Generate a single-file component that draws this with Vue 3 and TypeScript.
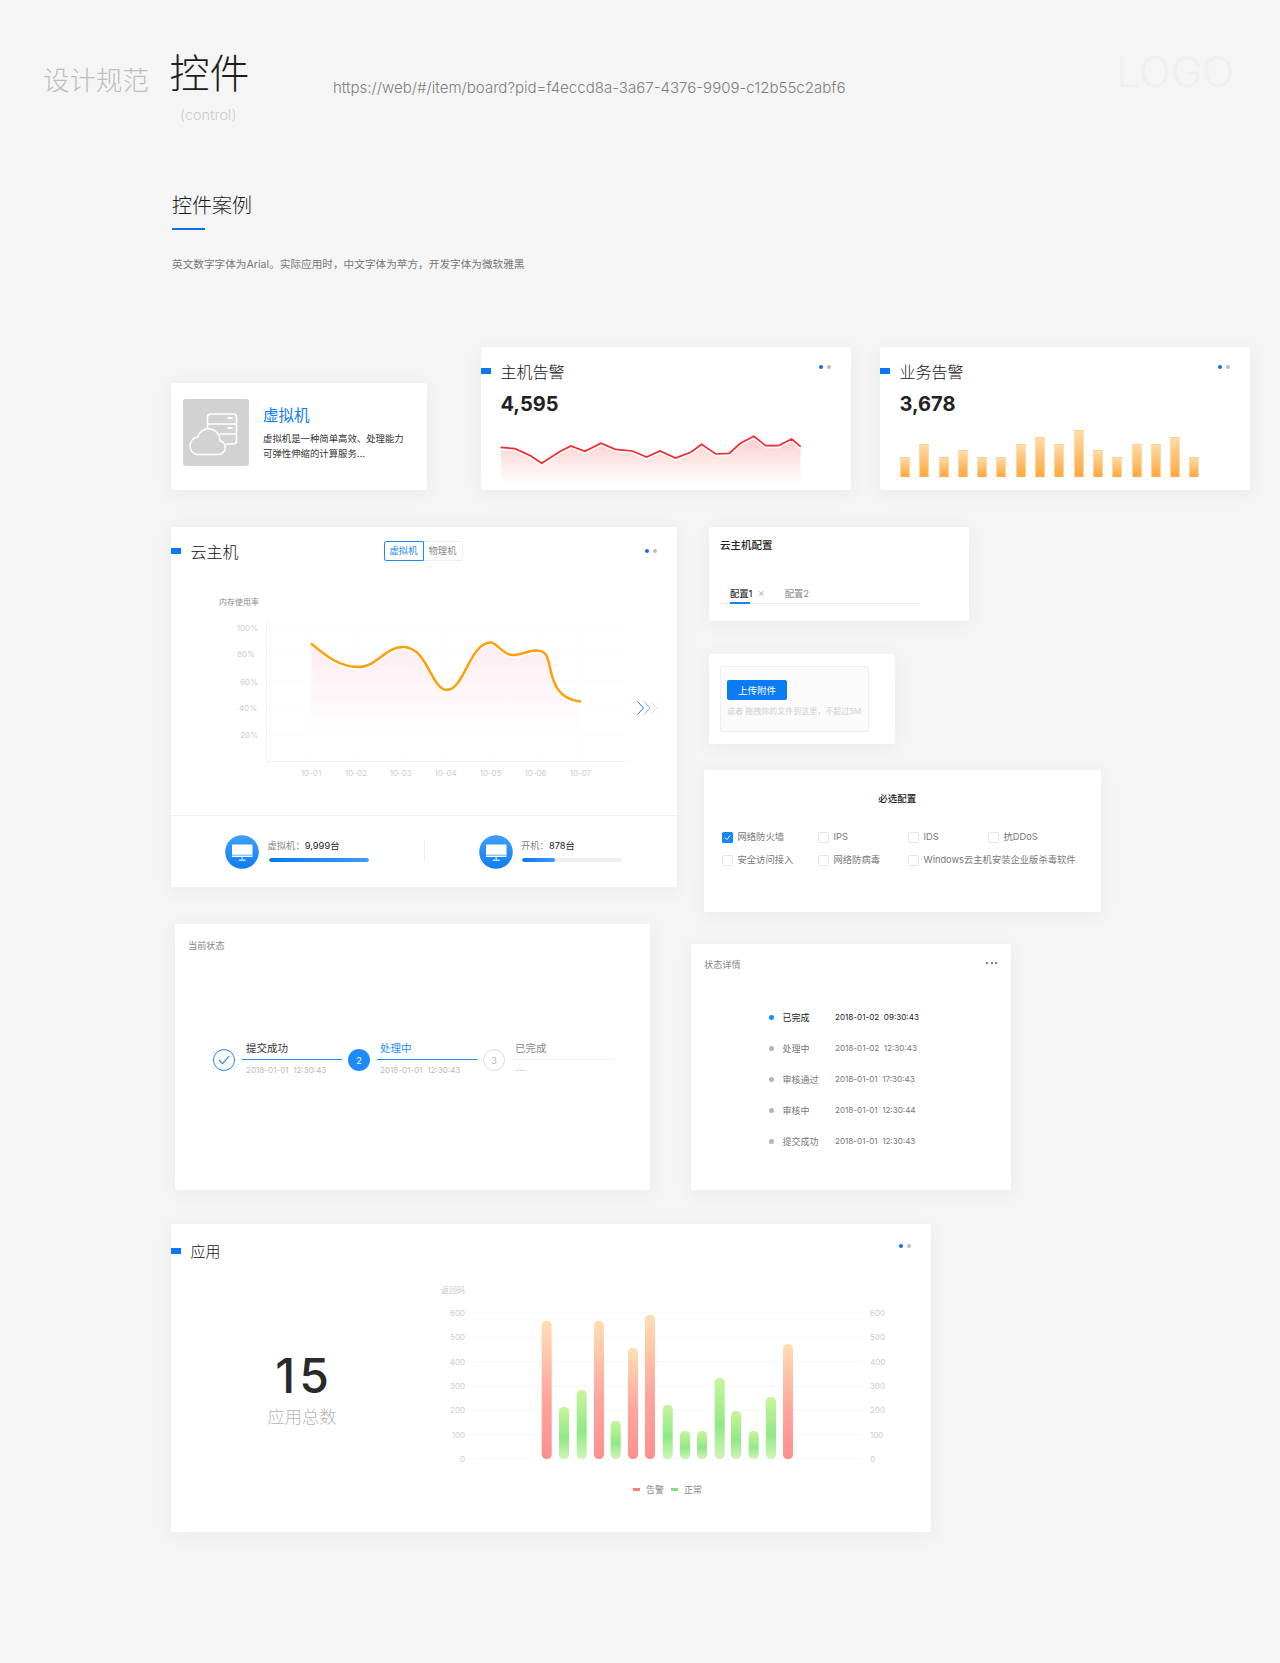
<template>
  <div class="page">
    <header class="top">
      <div class="brand">设计规范</div>
      <div class="page-title">
        <h1>控件</h1>
        <p>(control)</p>
      </div>
      <div class="url">https://web/#/item/board?pid=f4eccd8a-3a67-4376-9909-c12b55c2abf6</div>
      <div class="logo">LOGO</div>
    </header>

    <section class="intro">
      <h2>控件案例</h2>
      <div class="intro-line"></div>
      <p>英文数字字体为Arial。实际应用时，中文字体为苹方，开发字体为微软雅黑</p>
    </section>

    <div class="row row-1">
      <div class="card vm-card">
        <div class="vm-icon">
          <svg width="66" height="67" viewBox="0 0 65 67" fill="none" stroke="#fff" stroke-width="1.5">
            <path d="M24 30V18a3 3 0 0 1 3-3h23a3 3 0 0 1 3 3v24a3 3 0 0 1-3 3h-8" />
            <path d="M24 25h29M36 35h17" />
            <path d="M44 19h5M44 29h5" stroke-width="2" />
            <path d="M13 55.5h22a7 7 0 0 0 1.5-13.8A11.5 11.5 0 0 0 14 38a9 9 0 0 0-1 17.5z" fill="#d2d2d2" />
          </svg>
        </div>
        <div class="vm-text">
          <h3>虚拟机</h3>
          <p>虚拟机是一种简单高效、处理能力</p>
          <p>可弹性伸缩的计算服务...</p>
        </div>
      </div>

      <div class="card alarm-card alarm-host">
        <div class="card-head">
          <i class="head-bar"></i>
          <span class="head-title">主机告警</span>
          <span class="dots dots-high"><i></i><i></i></span>
        </div>
        <div class="alarm-num">4,595</div>
        <svg class="spark" width="370" height="60" viewBox="481 430 370 60">
          <defs>
            <linearGradient id="sparkFill" x1="0" y1="0" x2="0" y2="1">
              <stop offset="0" stop-color="#fbcccc" />
              <stop offset=".9" stop-color="#ffffff" />
            </linearGradient>
          </defs>
          <path :d="sparkArea" fill="url(#sparkFill)" />
          <path :d="sparkLine" fill="none" stroke="#fff" stroke-width="2" transform="translate(0 1.6)" />
          <path :d="sparkLine" fill="none" stroke="#f4282d" stroke-width="1.7" />
        </svg>
      </div>

      <div class="card alarm-card alarm-biz">
        <div class="card-head">
          <i class="head-bar"></i>
          <span class="head-title">业务告警</span>
          <span class="dots dots-high"><i></i><i></i></span>
        </div>
        <div class="alarm-num">3,678</div>
        <div class="mini-bars">
          <i v-for="(h, n) in miniBars" :key="n" :style="{ height: h + 'px' }"></i>
        </div>
      </div>
    </div>

    <div class="row row-2">
      <div class="card host-card">
        <div class="card-head">
          <i class="head-bar"></i>
          <span class="head-title">云主机</span>
          <div class="switch">
            <span class="on">虚拟机</span>
            <span>物理机</span>
          </div>
          <span class="dots"><i></i><i></i></span>
        </div>
        <svg class="host-chart" width="506" height="250" viewBox="171 565 506 250">
          <defs>
            <linearGradient id="memFill" x1="0" y1="0" x2="0" y2="1">
              <stop offset="0" stop-color="#fcecf1" />
              <stop offset=".9" stop-color="#ffffff" />
            </linearGradient>
          </defs>
          <text x="219" y="605" class="t-title">内存使用率</text>
          <path v-for="y in memGrid" :key="y" :d="`M267 ${y}H628`" stroke="#fcfcfc" />
          <path v-for="x in memTicks" :key="x" :d="`M${x} 625V761`" stroke="#fdfdfd" />
          <path d="M266.5 620V761.5H628" fill="none" stroke="#f1f1f1" />
          <text v-for="l in memLabels" :key="l.t" :x="l.x" :y="l.y" class="t-axis" text-anchor="end">{{ l.t }}</text>
          <text v-for="(d, n) in memDays" :key="d" :x="311 + n * 44.9" y="776" class="t-axis" text-anchor="middle">{{ d }}</text>
          <path :d="memLine + 'V746H311.7Z'" fill="url(#memFill)" />
          <path :d="memLine" fill="none" stroke="#fff" stroke-width="2" transform="translate(0 2)" />
          <path :d="memLine" fill="none" stroke="#ff9f0a" stroke-width="2.5" stroke-linecap="round" />
          <g fill="none" stroke="#1478f0" stroke-width="1">
            <path d="M637.5 701.5l6 6.5-6 6.5" />
            <path d="M644 701.5l6 6.5-6 6.5" opacity=".55" />
            <path d="M651 701.5l6 6.5-6 6.5" opacity=".2" />
            <path d="M658 701.5l6 6.5-6 6.5" opacity=".06" />
          </g>
        </svg>
        <div class="stats">
          <template v-for="(s, n) in hostStats" :key="s.label">
            <div class="stat">
              <svg class="stat-icon" width="34" height="34" viewBox="0 0 34 34">
                <defs>
                  <linearGradient id="statFill" x1="0" y1="0" x2="0" y2="1">
                    <stop offset="0" stop-color="#3ea0fb" />
                    <stop offset="1" stop-color="#0f7df0" />
                  </linearGradient>
                </defs>
                <circle cx="17" cy="17" r="16.8" fill="url(#statFill)" />
                <rect x="7" y="9.5" width="20.5" height="12.5" fill="#fff" rx=".6" />
                <path d="M7 20.2h20.5" stroke="#1c84f2" stroke-width=".7" />
                <path d="M17.2 22.2v2.6M13.8 25.2h7" stroke="#fff" stroke-width="1" />
              </svg>
              <div class="stat-info">
                <div class="stat-label">{{ s.label }}<b>{{ s.value }}</b></div>
                <div class="stat-track"><i :style="{ width: s.pct + '%' }"></i></div>
              </div>
            </div>
            <div v-if="n === 0" class="stat-sep"></div>
          </template>
        </div>
      </div>

      <div class="side-col">
        <div class="card config-card">
          <h4>云主机配置</h4>
          <div class="tabs">
            <span class="tab active">配置1</span>
            <span class="tab-x">×</span>
            <span class="tab">配置2</span>
          </div>
        </div>

        <div class="card upload-card">
          <div class="upload-box">
            <button class="upload-btn" type="button">上传附件</button>
            <p>或者 拖拽你的文件到这里，不超过5M</p>
          </div>
        </div>

        <div class="card must-card">
          <h4>必选配置</h4>
          <div class="checks">
            <label v-for="c in checks" :key="c.text" class="check">
              <i :class="{ on: c.on }">
                <svg v-if="c.on" width="11" height="11" viewBox="0 0 11 11" fill="none" stroke="#fff" stroke-width="1">
                  <path d="M2.8 5.6l2 2 3.4-4" />
                </svg>
              </i>
              {{ c.text }}
            </label>
          </div>
        </div>
      </div>
    </div>

    <div class="row row-3">
      <div class="card state-card">
        <div class="state-title">当前状态</div>
        <div class="steps">
          <div v-for="(s, n) in steps" :key="s.label" class="step" :class="s.kind">
            <span class="step-dot">
              <svg v-if="n === 0" width="12" height="10" viewBox="0 0 12 10" fill="none" stroke="#1a8cff" stroke-width="1.1">
                <path d="M1 5l3.6 3.6L11 1.2" />
              </svg>
              <template v-else>{{ n + 1 }}</template>
            </span>
            <div class="step-body">
              <div class="step-label">{{ s.label }}</div>
              <div class="step-date">{{ s.date }}</div>
            </div>
          </div>
        </div>
      </div>

      <div class="card detail-card">
        <div class="detail-head">
          <span>状态详情</span>
          <span class="more"><i></i><i></i><i></i></span>
        </div>
        <ul class="detail-list">
          <li v-for="(d, n) in details" :key="d.label" :class="{ current: n === 0 }">
            <i></i>
            <span class="d-label">{{ d.label }}</span>
            <span class="d-date">{{ d.date }}</span>
          </li>
        </ul>
      </div>
    </div>

    <div class="row row-4">
      <div class="card app-card">
        <div class="card-head">
          <i class="head-bar"></i>
          <span class="head-title">应用</span>
          <span class="dots dots-app"><i></i><i></i></span>
        </div>
        <div class="app-body">
          <div class="app-total">
            <strong>15</strong>
            <span>应用总数</span>
          </div>
          <svg class="app-chart" width="497" height="269" viewBox="433 1263 497 269">
            <defs>
              <linearGradient id="redBar" x1="0" y1="0" x2="0" y2="1">
                <stop offset="0" stop-color="#ffdfb4" />
                <stop offset=".55" stop-color="#ffa69c" />
                <stop offset="1" stop-color="#ff8f90" />
              </linearGradient>
              <linearGradient id="greenBar" x1="0" y1="0" x2="0" y2="1">
                <stop offset="0" stop-color="#c8f59c" />
                <stop offset=".6" stop-color="#90e986" />
                <stop offset="1" stop-color="#d0f5b8" />
              </linearGradient>
            </defs>
            <text x="441" y="1293" class="t-title t-light">返回码</text>
            <g v-for="(v, n) in appScale" :key="v">
              <path :d="`M473 ${1313 + n * 24.35}H862`" stroke="#f8f8f8" />
              <text x="465" :y="1316 + n * 24.35" class="t-axis" text-anchor="end">{{ v }}</text>
              <text x="870" :y="1316 + n * 24.35" class="t-axis">{{ v }}</text>
            </g>
            <rect
              v-for="b in appBars"
              :key="b.x"
              :x="b.x - 5"
              :y="b.top"
              width="10"
              :height="1459 - b.top"
              rx="4.5"
              :fill="b.red ? 'url(#redBar)' : 'url(#greenBar)'"
            />
            <rect x="633" y="1488" width="7" height="3" fill="#ff7d7d" />
            <text x="646" y="1492.5" class="t-legend">告警</text>
            <rect x="671" y="1488" width="7" height="3" fill="#7fe574" />
            <text x="684" y="1492.5" class="t-legend">正常</text>
          </svg>
        </div>
      </div>
    </div>
  </div>
</template>

<script setup lang="ts">
import { computed } from "vue";

const sparkPts: [number, number][] = [
  [500.6, 447.3], [514.9, 448.7], [530.5, 455.7], [541.7, 463.3], [559.6, 451.7], [570.7, 446],
  [585, 451.3], [601, 443.3], [615.4, 449.3], [632.3, 451], [646.6, 457], [660, 451],
  [675.6, 458], [691.3, 452], [701.5, 444.3], [715.8, 454], [729.2, 453.3], [740.4, 443.3],
  [753.8, 436.3], [765.8, 445.7], [778.3, 445.7], [791.7, 439], [800.6, 446.7],
];

const sparkLine = computed(() => "M" + sparkPts.map((p) => p.join(" ")).join("L"));
const sparkArea = computed(() => sparkLine.value + "V488H500.6Z");

const miniBars = [20, 33, 20, 27, 20, 20, 33, 40, 33, 47, 27, 20, 33, 33, 40, 20];

const memLine =
  "M311.7 644C326 656 340 667 358 667C378 667 384 647 403 647C428 647 431 690 447 690C464 690 470 642 491 642.5C497 643 503 655 513 655C522 655 528 650 537 650.5C552 651 547 668 555 684C560 696 570 700 580 701.5";
const memGrid = [628, 654, 681, 708, 735];
const memTicks = [311.7, 356.7, 401.7, 446.7, 491.7, 536.7, 581.7];
const memLabels = [
  { t: "100%", x: 258, y: 631 },
  { t: "80%", x: 255, y: 657 },
  { t: "60%", x: 258, y: 685 },
  { t: "40%", x: 257, y: 711 },
  { t: "20%", x: 258, y: 738 },
];
const memDays = ["10-01", "10-02", "10-03", "10-04", "10-05", "10-06", "10-07"];

const hostStats = [
  { label: "虚拟机：", value: "9,999台", pct: 100 },
  { label: "开机：", value: "878台", pct: 33 },
];

const checks = [
  { text: "网络防火墙", on: true },
  { text: "IPS", on: false },
  { text: "IDS", on: false },
  { text: "抗DDoS", on: false },
  { text: "安全访问接入", on: false },
  { text: "网络防病毒", on: false },
  { text: "Windows云主机安装企业版杀毒软件", on: false },
];

const steps = [
  { label: "提交成功", date: "2018-01-01  12:30:43", kind: "done" },
  { label: "处理中", date: "2018-01-01  12:30:43", kind: "doing" },
  { label: "已完成", date: "---", kind: "todo" },
];

const details = [
  { label: "已完成", date: "2018-01-02  09:30:43" },
  { label: "处理中", date: "2018-01-02  12:30:43" },
  { label: "审核通过", date: "2018-01-01  17:30:43" },
  { label: "审核中", date: "2018-01-01  12:30:44" },
  { label: "提交成功", date: "2018-01-01  12:30:43" },
];

const appScale = [600, 500, 400, 300, 200, 100, 0];
const appBars = [
  { x: 546.7, top: 1320.7, red: true },
  { x: 564, top: 1407, red: false },
  { x: 581.7, top: 1390, red: false },
  { x: 599, top: 1320.7, red: true },
  { x: 615.7, top: 1420.7, red: false },
  { x: 633, top: 1348, red: true },
  { x: 650, top: 1314.7, red: true },
  { x: 667.7, top: 1404.7, red: false },
  { x: 685, top: 1431, red: false },
  { x: 702, top: 1431, red: false },
  { x: 719.7, top: 1378, red: false },
  { x: 736, top: 1411, red: false },
  { x: 753.7, top: 1431, red: false },
  { x: 771, top: 1397, red: false },
  { x: 788, top: 1344, red: true },
];
</script>

<style>
body {
  background: #f5f5f5;
}
</style>

<style scoped>
.page {
  height: 1663px;
  overflow: hidden;
  background: #f5f5f5;
  font-family: Inter, "Noto Sans CJK SC", sans-serif;
  color: #333;
}

h1, h2, h3, h4, p, ul {
  margin: 0;
  padding: 0;
  font-weight: 400;
}

i {
  display: block;
  font-style: normal;
}

.top {
  display: flex;
  align-items: flex-start;
  height: 130px;
  padding-left: 43px;
}

.brand {
  margin-top: 63px;
  font-size: 26.5px;
  line-height: 34px;
  font-weight: 300;
  color: #bdbdbd;
}

.page-title {
  margin: 51px 0 0 22px;
  width: 78px;
}

.page-title h1 {
  margin-left: -1.5px;
  font-size: 40px;
  line-height: 46px;
  font-weight: 300;
  color: #1c1c1c;
  white-space: nowrap;
}

.page-title p {
  margin: 8px 0 0 9px;
  font-size: 14.5px;
  line-height: 20px;
  font-weight: 300;
  color: #cbcbcb;
  white-space: nowrap;
}

.url {
  margin: 78px 0 0 84px;
  font-size: 15.06px;
  line-height: 20px;
  font-weight: 300;
  color: #808080;
}

.logo {
  margin: 47px 46px 0 auto;
  font-size: 42px;
  line-height: 50px;
  font-weight: 300;
  color: #efefef;
}

.intro {
  padding: 62px 0 0 172px;
}

.intro h2 {
  font-size: 20px;
  line-height: 28px;
  font-weight: 300;
  color: #1c1c1c;
}

.intro-line {
  width: 33px;
  height: 2px;
  margin-top: 8px;
  background: #0a6fe8;
}

.intro p {
  margin-top: 28px;
  font-size: 10.65px;
  line-height: 14px;
  color: #777;
}

.row {
  display: flex;
  padding-left: 171px;
}

.card {
  background: #fff;
  border-radius: 2px;
  box-shadow: 0 3px 20px rgba(0, 0, 0, 0.05);
}

.row-1 {
  align-items: flex-end;
  height: 143px;
  margin-top: 75px;
}

.vm-card {
  display: flex;
  width: 256px;
  height: 107px;
  padding: 16px 12px;
  box-sizing: border-box;
}

.vm-icon {
  flex: none;
  width: 66px;
  height: 67px;
  background: #d2d2d2;
  border-radius: 3px;
}

.vm-text {
  margin: 6px 0 0 14px;
  white-space: nowrap;
}

.vm-text h3 {
  margin-bottom: 4px;
  font-size: 15.5px;
  line-height: 22px;
  font-weight: 400;
  color: #0a7cf5;
}

.vm-text p {
  font-size: 9.4px;
  line-height: 15px;
  color: #333;
}

.alarm-card {
  display: flex;
  flex-direction: column;
  width: 370px;
  height: 143px;
}

.alarm-host {
  margin-left: 54px;
}

.alarm-biz {
  margin-left: 29px;
}

.card-head {
  display: flex;
  align-items: center;
  height: 24px;
  padding: 12px 20px 0 0;
}

.head-bar {
  flex: none;
  width: 10px;
  height: 6px;
  background: #0a78f0;
}

.head-title {
  margin: 1px 0 0 9.5px;
  font-size: 16px;
  line-height: 24px;
  font-weight: 300;
  color: #111;
}

.dots {
  display: flex;
  gap: 4.5px;
  margin-left: auto;
}

.dots i {
  width: 4px;
  height: 4px;
  border-radius: 50%;
  background: #bcbcbc;
}

.dots i:first-child {
  background: #0a6ff0;
}

.dots-high {
  margin-top: -8px;
}

.alarm-num {
  margin: 9px 0 -1px 19.5px;
  font-size: 20px;
  line-height: 24px;
  font-weight: 700;
  color: #222;
}

.spark {
  display: block;
  margin-top: auto;
}

.mini-bars {
  display: flex;
  align-items: flex-end;
  gap: 9.3px;
  margin: auto 0 13px 20px;
}

.mini-bars i {
  width: 10px;
  box-sizing: border-box;
  background: linear-gradient(#ffdba6, #ffa840);
  border: 1px solid rgba(255, 225, 180, 0.7);
  border-bottom-color: #ffae55;
}

.row-2 {
  margin-top: 37px;
  align-items: flex-start;
}

.host-card {
  width: 506px;
  height: 360px;
  flex: none;
}

.switch {
  display: flex;
  margin-left: 145px;
  font-size: 9.3px;
  line-height: 18px;
  color: #888;
}

.switch span {
  box-sizing: border-box;
  width: 39px;
  height: 20px;
  text-align: center;
  border: 1px solid #eee;
  border-left: 0;
  border-radius: 0 2px 2px 0;
}

.switch .on {
  width: 40px;
  color: #1a8cff;
  border: 1px solid #1a8cff;
  border-radius: 2px 0 0 2px;
}

.host-chart {
  display: block;
  margin-top: 2px;
  border-bottom: 1px solid #eee;
  box-sizing: content-box;
}

.t-title {
  font-size: 8px;
  fill: #888;
}

.t-light {
  fill: #c8c8c8;
}

.t-axis {
  font-size: 8px;
  fill: #cdcdcd;
}

.t-legend {
  font-size: 9px;
  fill: #888;
}

.stats {
  display: flex;
  padding: 19px 0 0 54px;
}

.stat {
  display: flex;
  width: 199px;
}

.stat-icon {
  flex: none;
}

.stat-info {
  margin: 4px 0 0 8.5px;
}

.stat-label {
  font-size: 9.3px;
  line-height: 14px;
  color: #888;
}

.stat-label b {
  font-weight: 400;
  color: #222;
}

.stat-track {
  width: 100px;
  height: 4px;
  margin: 5px 0 0 1px;
  border-radius: 2px;
  background: #eee;
  overflow: hidden;
}

.stat-track i {
  height: 100%;
  border-radius: 2px;
  background: linear-gradient(90deg, #0a78ee, #3a9cf9);
}

.stat-sep {
  width: 1px;
  height: 20px;
  margin: 5px 54px 0 0;
  background: #eee;
}

.side-col {
  display: flex;
  flex-direction: column;
  align-items: flex-start;
  margin-left: 27px;
}

.config-card {
  width: 260px;
  height: 94px;
  margin-left: 5px;
  padding: 12px 0 0 11px;
  box-sizing: border-box;
}

.config-card h4 {
  font-size: 10.5px;
  line-height: 14px;
  font-weight: 500;
  color: #222;
}

.tabs {
  position: relative;
  display: flex;
  width: 190px;
  height: 17px;
  margin-top: 33px;
  padding-left: 10px;
  font-size: 9.3px;
  line-height: 15px;
  color: #888;
  border-bottom: 1px solid #eee;
}

.tab.active {
  color: #333;
  font-weight: 500;
}

.tab.active::after {
  content: "";
  position: absolute;
  left: 10px;
  bottom: -1px;
  width: 20px;
  height: 2px;
  background: #1a86f5;
}

.tab-x {
  margin: 0 20px 0 5px;
  color: #bbb;
  font-size: 11px;
}

.upload-card {
  width: 186px;
  height: 90px;
  margin: 33px 0 0 5px;
  padding: 12px 0 0 11px;
  box-sizing: border-box;
}

.upload-box {
  width: 149px;
  height: 66px;
  box-sizing: border-box;
  padding: 13px 0 0 6px;
  background: #fbfbfb;
  border: 1px solid #f0f0f0;
  border-radius: 2px;
}

.upload-btn {
  display: block;
  width: 60px;
  height: 20px;
  padding: 0;
  font: inherit;
  font-size: 9.5px;
  color: #fff;
  background: #0a7cf5;
  border: 0;
  border-radius: 2px;
}

.upload-box p {
  margin-top: 5px;
  font-size: 8px;
  line-height: 12px;
  color: #cfcfcf;
  white-space: nowrap;
}

.must-card {
  width: 397px;
  height: 142px;
  margin-top: 26px;
  box-sizing: border-box;
  padding: 22px 0 0 17.5px;
}

.must-card h4 {
  padding-right: 28px;
  text-align: center;
  font-size: 9.5px;
  line-height: 14px;
  font-weight: 500;
  color: #222;
}

.checks {
  display: grid;
  grid-template-columns: 96px 90px 80px auto;
  row-gap: 9px;
  margin-top: 24px;
  justify-content: start;
}

.check {
  display: flex;
  align-items: center;
  gap: 5px;
  font-size: 9.3px;
  line-height: 14px;
  color: #777;
  white-space: nowrap;
}

.check i {
  flex: none;
  width: 11px;
  height: 11px;
  box-sizing: border-box;
  border: 1px solid #e5e5e5;
  border-radius: 1.5px;
}

.check i.on {
  border: 0;
  background: #1a86f5;
}

.check i svg {
  display: block;
}

.check:nth-child(7) {
  grid-column: span 2;
}

.row-3 {
  align-items: flex-end;
  height: 266px;
  margin-top: 12px;
}

.state-card {
  width: 475px;
  height: 266px;
  margin-left: 4px;
  box-sizing: border-box;
  padding: 15px 0 0 13px;
}

.state-title {
  font-size: 9.2px;
  line-height: 14px;
  color: #888;
}

.steps {
  display: flex;
  gap: 6px;
  margin: 84px 0 0 25px;
}

.step {
  display: flex;
  gap: 7px;
  align-items: flex-start;
}

.step-dot {
  flex: none;
  display: flex;
  align-items: center;
  justify-content: center;
  width: 22px;
  height: 22px;
  margin-top: 12px;
  box-sizing: border-box;
  border-radius: 50%;
  font-size: 9px;
}

.step-body {
  width: 100px;
}

.step-label {
  height: 22px;
  padding-left: 3px;
  font-size: 10.5px;
  line-height: 24px;
  color: #333;
  border-bottom: 1px solid #1a8cff;
}

.done .step-label,
.done .step-date {
  padding-left: 4px;
}

.step-date {
  margin-top: 3px;
  padding-left: 3px;
  font-size: 8.1px;
  line-height: 14px;
  color: #bbb;
  white-space: pre;
}

.done .step-dot {
  border: 1px solid #1a8cff;
}

.doing .step-dot {
  background: #1a8cff;
  color: #fff;
}

.doing .step-label {
  color: #1a8cff;
}

.todo .step-dot {
  border: 1px solid #ddd;
  color: #bbb;
}

.todo .step-label {
  color: #888;
  border-bottom-color: #f2f2f2;
}

.detail-card {
  width: 320px;
  height: 246px;
  margin-left: 41px;
}

.detail-head {
  display: flex;
  justify-content: space-between;
  align-items: center;
  padding: 14px 14px 0 13px;
  font-size: 9.2px;
  line-height: 14px;
  color: #888;
}

.more {
  display: flex;
  gap: 2.5px;
  margin-top: -4px;
}

.more i {
  width: 2px;
  height: 2px;
  border-radius: 50%;
  background: #555;
}

.detail-list {
  margin-top: 30px;
  padding-left: 77.5px;
  list-style: none;
}

.detail-list li {
  display: flex;
  align-items: center;
  height: 30.9px;
  font-size: 9px;
  color: #777;
}

.detail-list li > i {
  width: 5px;
  height: 5px;
  margin-right: 9px;
  border-radius: 50%;
  background: #b5b5b5;
}

.d-label {
  width: 52.5px;
}

.d-date {
  font-size: 8.1px;
  white-space: pre;
}

.detail-list li.current {
  color: #222;
}

.detail-list li.current > i {
  background: #1a8cff;
}

.row-4 {
  margin-top: 34px;
}

.app-card {
  width: 760px;
  height: 308px;
}

.app-card .card-head {
  padding-top: 15px;
}

.app-card .head-title {
  font-size: 15px;
}

.dots-app {
  margin-top: -10px;
}

.app-body {
  display: flex;
  height: 269px;
}

.app-total {
  display: flex;
  flex-direction: column;
  align-items: center;
  flex: none;
  width: 262px;
  padding-top: 85px;
  box-sizing: border-box;
}

.app-total strong {
  margin-left: 4px;
  font-size: 48px;
  line-height: 56px;
  font-weight: 500;
  letter-spacing: 4px;
  color: #2a2a2a;
}

.app-total span {
  font-size: 17.2px;
  line-height: 26px;
  font-weight: 300;
  color: #b5b5b5;
}

.app-chart {
  display: block;
  flex: none;
}
</style>
